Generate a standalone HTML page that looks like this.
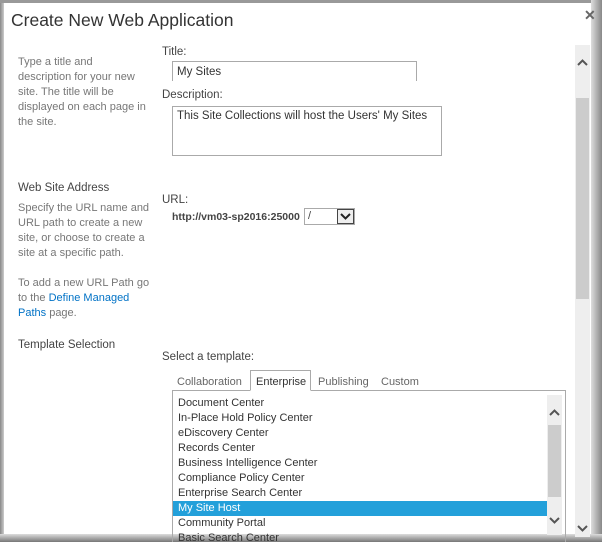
<!DOCTYPE html>
<html><head><style>
*{margin:0;padding:0;box-sizing:border-box}
body{width:602px;height:542px;overflow:hidden;background:#fff;font-family:"Liberation Sans",sans-serif;position:relative;color:#444}
.a{position:absolute;white-space:nowrap}
.s{font-size:11px;color:#777;line-height:15px}
.l{font-size:11.5px;color:#444}
.row{position:absolute;left:178px;font-size:11px;color:#333;height:15px;line-height:15px}
</style></head><body>
<div class="a" style="left:0;top:0;width:4px;height:542px;background:linear-gradient(90deg,#888,#ccc)"></div>
<div class="a" style="left:0;top:0;width:602px;height:3px;background:#999"></div>
<div class="a" style="left:591px;top:0;width:11px;height:542px;background:linear-gradient(90deg,#ddd,#888)"></div>
<div class="a" style="left:0;top:534px;width:602px;height:8px;background:linear-gradient(#ddd,#777)"></div>
<div class="a" style="left:11px;top:10px;font-size:17.5px;color:#333">Create New Web Application</div>
<div class="a" style="left:584px;top:7px;font-size:14px;color:#666;font-weight:bold">✕</div>

<div class="a s" style="left:18px;top:55px">Type a title and<br>description for your new<br>site. The title will be<br>displayed on each page in<br>the site.</div>
<div class="a l" style="left:162px;top:46px">Title:</div>
<div class="a" style="left:172px;top:61px;width:245px;height:20px;border:1px solid #aaa;border-bottom:none;font-size:11.5px;padding:4px 4px;color:#333">My Sites</div>
<div class="a l" style="left:162px;top:89px">Description:</div>
<div class="a" style="left:172px;top:106px;width:270px;height:50px;border:1px solid #aaa;font-size:11.5px;padding:3px 4px;color:#333">This Site Collections will host the Users' My Sites</div>

<div class="a" style="left:18px;top:182px;font-size:11.5px;color:#444">Web Site Address</div>
<div class="a s" style="left:18px;top:201px">Specify the URL name and<br>URL path to create a new<br>site, or choose to create a<br>site at a specific path.<br><br>To add a new URL Path go<br>to the <span style="color:#0072c6">Define Managed</span><br><span style="color:#0072c6">Paths</span> page.</div>
<div class="a l" style="left:162px;top:194px">URL:</div>
<div class="a" style="left:172px;top:211px;font-size:10.5px;font-weight:bold;color:#444">http://vm03-sp2016:25000</div>
<div class="a" style="left:304px;top:208px;width:51px;height:17px;border:1px solid #aaa;font-size:11px;padding:1px 3px">/</div>
<div class="a" style="left:337px;top:209px;width:17px;height:15px;border:1px solid #555;background:#eee;font-size:10px;text-align:center;line-height:14px;color:#222">&#x2335;</div>
<svg class="a" style="left:337px;top:209px" width="17" height="15"><rect x="0.5" y="0.5" width="16" height="14" fill="#eee" stroke="#444"/><path d="M4 5l4.5 4.5L13 5" stroke="#222" stroke-width="2" fill="none"/></svg>

<div class="a" style="left:18px;top:339px;font-size:11.5px;color:#444">Template Selection</div>
<div class="a l" style="left:162px;top:351px">Select a template:</div>
<div class="a" style="left:177px;top:376px;font-size:11px;color:#666">Collaboration</div>
<div class="a" style="left:250px;top:370px;width:61px;height:21px;border:1px solid #aaa;border-bottom:1px solid #fff;background:#fff;z-index:2"></div>
<div class="a" style="left:256px;top:376px;font-size:11px;color:#333;z-index:3">Enterprise</div>
<div class="a" style="left:318px;top:376px;font-size:11px;color:#666">Publishing</div>
<div class="a" style="left:381px;top:376px;font-size:11px;color:#666">Custom</div>
<div class="a" style="left:172px;top:390px;width:394px;height:152px;border:1px solid #aaa;border-bottom:none"></div>
<div class="a" style="left:173px;top:501px;width:374px;height:15px;background:#23a0da"></div>
<div class="row" style="top:396px">Document Center</div>
<div class="row" style="top:411px">In-Place Hold Policy Center</div>
<div class="row" style="top:426px">eDiscovery Center</div>
<div class="row" style="top:441px">Records Center</div>
<div class="row" style="top:456px">Business Intelligence Center</div>
<div class="row" style="top:471px">Compliance Policy Center</div>
<div class="row" style="top:486px">Enterprise Search Center</div>
<div class="row" style="top:501px;color:#fff">My Site Host</div>
<div class="row" style="top:516px">Community Portal</div>
<div class="row" style="top:531px">Basic Search Center</div>
<div class="a" style="left:547px;top:395px;width:15px;height:140px;background:#eee"></div>
<div class="a" style="left:548px;top:425px;width:13px;height:72px;background:#ccc"></div>
<svg class="a" style="left:548px;top:408px" width="13" height="9"><path d="M2 7l4.5-4.5L11 7" stroke="#555" stroke-width="2" fill="none"/></svg>
<svg class="a" style="left:548px;top:516px" width="13" height="9"><path d="M2 2l4.5 4.5L11 2" stroke="#555" stroke-width="2" fill="none"/></svg>

<div class="a" style="left:575px;top:45px;width:15px;height:492px;background:#eee"></div>
<div class="a" style="left:576px;top:98px;width:13px;height:201px;background:#ccc"></div>
<svg class="a" style="left:576px;top:58px" width="13" height="9"><path d="M2 7l4.5-4.5L11 7" stroke="#555" stroke-width="2" fill="none"/></svg>
<svg class="a" style="left:576px;top:524px" width="13" height="9"><path d="M2 2l4.5 4.5L11 2" stroke="#555" stroke-width="2" fill="none"/></svg>
</body></html>
